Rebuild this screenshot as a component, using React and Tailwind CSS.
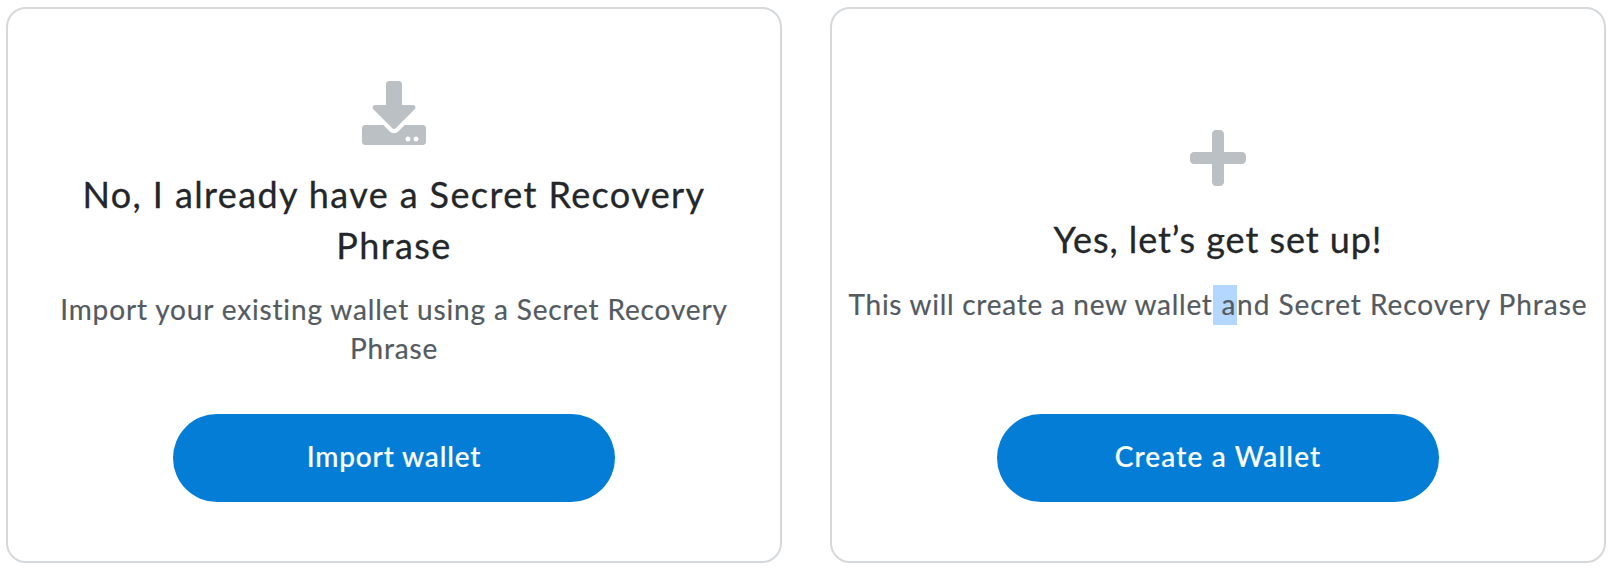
import { FaDownload, FaPlus } from "react-icons/fa";

function Card({ icon, iconClass, title, titleClass, text, textClass, action, actionClass }) {
  return (
    <section className="flex h-[556px] w-[776px] shrink-0 flex-col items-center rounded-[20px] border-2 border-[#d6d9dc] bg-white text-center">
      <div className={iconClass}>{icon}</div>
      <h2 className={titleClass}>{title}</h2>
      <p className={textClass}>{text}</p>
      <button className="mt-auto mb-[59px] flex h-[88px] w-[442px] items-center justify-center rounded-full bg-[#037dd6] pb-[3px] text-[28px] leading-[39px] font-medium text-white [-webkit-text-stroke:0.2px]">
        <span className={actionClass}>{action}</span>
      </button>
    </section>
  );
}

export default function App() {
  return (
    <main className="flex h-[574px] w-[1618px] gap-12 overflow-hidden bg-white pt-[7px] pl-[6px] font-['Lato',sans-serif]">
      <Card
        icon={<FaDownload className="size-16" />}
        iconClass="mt-[72px] text-[#bbc0c5]"
        title={<>No, I already have a Secret Recovery<br />Phrase</>}
        titleClass="mt-[24px] text-[36px] leading-[51px] whitespace-nowrap tracking-[1.4px] text-[#24272a] [-webkit-text-stroke:0.3px]"
        text={<>Import your existing wallet using a Secret Recovery<br />Phrase</>}
        textClass="mt-[19px] text-[28px] leading-[39px] whitespace-nowrap tracking-[0.85px] text-[#535a61] [-webkit-text-stroke:0.2px]"
        action="Import wallet"
        actionClass="tracking-[0.85px]"
      />
      <Card
        icon={<FaPlus className="h-16 w-14" />}
        iconClass="mt-[117px] text-[#bbc0c5]"
        title="Yes, let’s get set up!"
        titleClass="mt-[24px] text-[36px] leading-[51px] whitespace-nowrap tracking-[0.93px] text-[#24272a] [-webkit-text-stroke:0.3px]"
        text={
          <>
            <span className="tracking-[0.73px]">This will create a new wallet</span>
            <span className="bg-[#b3d7ff] pt-[2px] pb-[4px] tracking-[1.7px]"> a</span>
            nd Secret Recovery Phrase
          </>
        }
        textClass="mt-[20px] text-[28px] leading-[39px] whitespace-nowrap tracking-[0.96px] text-[#535a61] [-webkit-text-stroke:0.2px]"
        action="Create a Wallet"
        actionClass="tracking-[1.15px]"
      />
    </main>
  );
}
